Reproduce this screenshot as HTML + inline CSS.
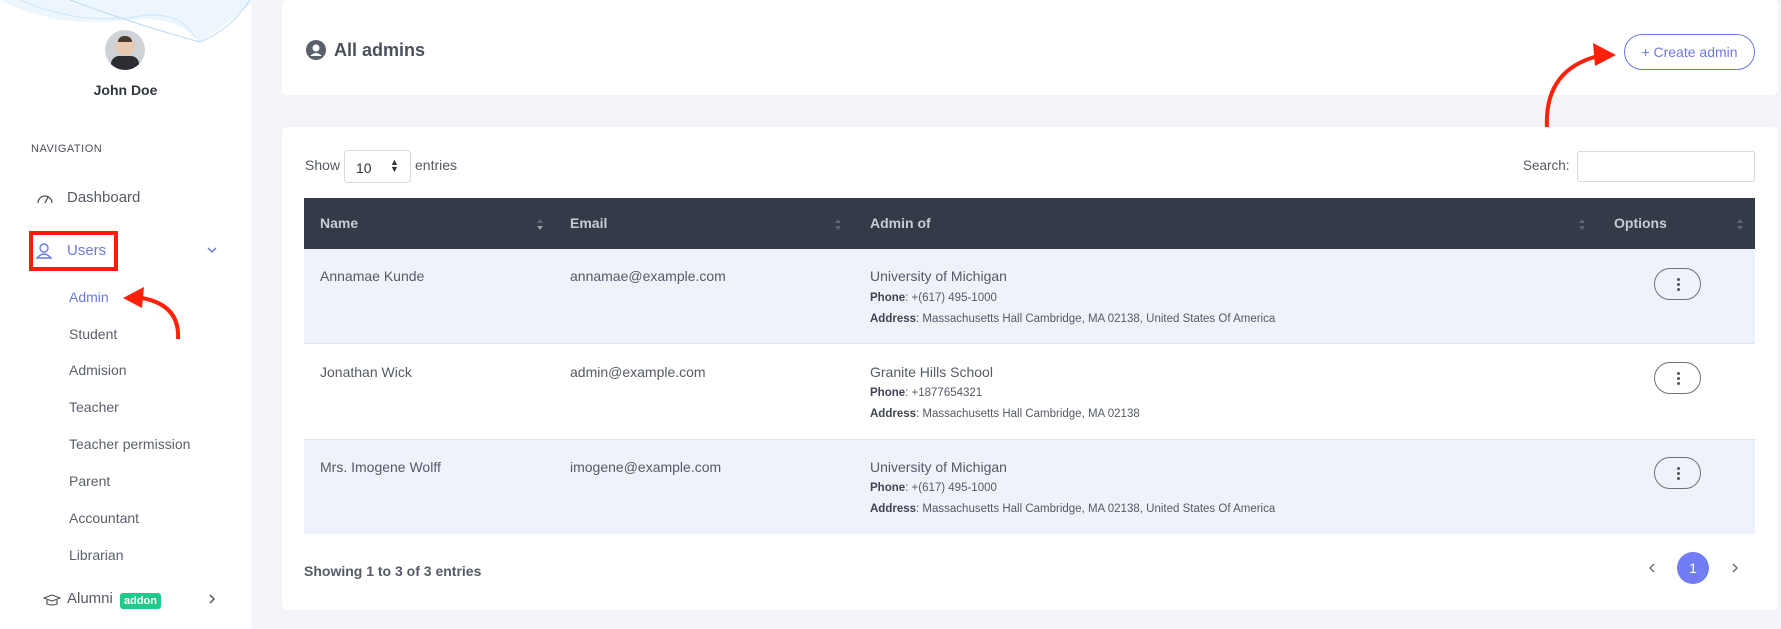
<!DOCTYPE html>
<html><head><meta charset="utf-8"><style>
*{box-sizing:border-box;margin:0;padding:0}
body{width:1781px;height:629px;overflow:hidden;background:#f3f4f8;font-family:"Liberation Sans",sans-serif;position:relative;color:#4a4f5a}
.abs{position:absolute;white-space:nowrap}
#side{position:absolute;left:0;top:0;width:251px;height:629px;background:#fff}
.nav{position:absolute;left:69px;font-size:14px;color:#5a5f6b}
.card{position:absolute;background:#fff;border-radius:5px}
.cell{position:absolute;font-size:14px;color:#555a66}
.small{font-size:11.5px;color:#555a66}
.small b{color:#3f4450}
.opt{position:absolute;left:1654px;width:47px;height:32px;border:1px solid #6c717c;border-radius:16px}
.opt i{position:absolute;left:22px;width:3px;height:3px;background:#555;border-radius:50%}
.sort{position:absolute;width:8px;height:14px}
</style></head><body>
<div id="side">
<svg class="abs" style="left:0;top:0" width="251" height="50"><path d="M0 0 Q60 30 130 20 Q175 14 200 42 Q230 22 251 3 L251 0Z" fill="#eef6fd"/><path d="M20 0 Q80 26 140 16 Q180 10 195 38" stroke="#cfe6f8" fill="none"/><path d="M70 0 Q140 26 200 42 Q230 30 250 0" stroke="#bcdaf4" fill="none"/></svg>
<div class="abs" style="left:105px;top:30px;width:40px;height:40px;border-radius:50%;background:radial-gradient(circle at 50% 40%,#e8c8b0 0 30%,#cfd3d8 31%);overflow:hidden"><div style="position:absolute;left:6px;top:26px;width:28px;height:18px;background:#2b2d33;border-radius:8px 8px 0 0"></div><div style="position:absolute;left:13px;top:6px;width:14px;height:6px;background:#4a3a30;border-radius:6px 6px 0 0"></div></div>
<div class="abs" style="left:0;width:251px;text-align:center;top:82px;font-size:14px;font-weight:bold;color:#2f3440">John Doe</div>
<div class="abs" style="left:31px;top:143px;font-size:11px;color:#4a4f5a;letter-spacing:.5px">NAVIGATION</div>
<svg class="abs" style="left:36px;top:192px" width="18" height="12"><path d="M2 11 A7 7 0 0 1 16 11" fill="none" stroke="#555" stroke-width="1.3"/><path d="M9 11 L12 5" stroke="#555" stroke-width="1.3"/></svg>
<div class="abs" style="left:67px;top:189px;font-size:15px;color:#555a66">Dashboard</div>
<div class="abs" style="left:29px;top:231px;width:89px;height:40px;border:4px solid #ff1a0a"></div>
<svg class="abs" style="left:35px;top:242px" width="18" height="18"><circle cx="9" cy="6" r="4" fill="none" stroke="#6c7ae0" stroke-width="1.4"/><path d="M2 16 Q9 8 16 16 Z" fill="none" stroke="#6c7ae0" stroke-width="1.4"/></svg>
<div class="abs" style="left:67px;top:242px;font-size:15px;color:#6c7ae0">Users</div>
<svg class="abs" style="left:207px;top:246px" width="10" height="8"><path d="M1 2 L5 6 L9 2" fill="none" stroke="#6c7ae0" stroke-width="1.5"/></svg>
<div class="nav" style="top:289px;color:#6c7ae0">Admin</div>
<div class="nav" style="top:326px">Student</div>
<div class="nav" style="top:362px">Admision</div>
<div class="nav" style="top:399px">Teacher</div>
<div class="nav" style="top:436px">Teacher permission</div>
<div class="nav" style="top:473px">Parent</div>
<div class="nav" style="top:510px">Accountant</div>
<div class="nav" style="top:547px">Librarian</div>
<svg class="abs" style="left:43px;top:594px" width="18" height="12"><path d="M1 4 L9 1 L17 4 L9 7Z" fill="none" stroke="#555" stroke-width="1.2"/><path d="M4 6 V10 Q9 12 14 10 V6" fill="none" stroke="#555" stroke-width="1.2"/></svg>
<div class="abs" style="left:67px;top:590px;font-size:15px;color:#555a66">Alumni</div>
<div class="abs" style="left:120px;top:593px;width:41px;height:16px;background:#22c98a;border-radius:3px;color:#fff;font-size:11px;font-weight:bold;text-align:center;line-height:16px">addon</div>
<svg class="abs" style="left:208px;top:594px" width="8" height="10"><path d="M2 1 L6 5 L2 9" fill="none" stroke="#555" stroke-width="1.5"/></svg>
<svg class="abs" style="left:110px;top:283px" width="80" height="60"><path d="M68 56 Q70 22 32 15" fill="none" stroke="#ff200a" stroke-width="4"/><path d="M13 15 L34 4 L32 25Z" fill="#ff200a"/></svg>
</div>

<div class="card" style="left:282px;top:0;width:1496px;height:95px"></div>
<svg class="abs" style="left:306px;top:40px" width="20" height="20"><circle cx="10" cy="10" r="10" fill="#5a606c"/><circle cx="10" cy="8" r="3.5" fill="#fff"/><path d="M4 16 Q10 10 16 16" fill="#fff"/></svg>
<div class="abs" style="left:334px;top:40px;font-size:18px;font-weight:bold;color:#4a4f5a">All admins</div>
<div class="abs" style="left:1624px;top:34px;width:131px;height:36px;border:1px solid #6c7ae0;border-radius:18px;color:#6c7ae0;font-size:14px;text-align:center;line-height:34px">+ Create admin</div>
<svg class="abs" style="left:1530px;top:40px" width="100" height="90"><path d="M17 88 Q14 30 68 16" fill="none" stroke="#ff200a" stroke-width="4"/><path d="M63 3 L86 15 L65 26Z" fill="#ff200a"/></svg>

<div class="card" style="left:282px;top:127px;width:1496px;height:483px"></div>
<div class="abs" style="left:305px;top:157px;font-size:14px;color:#555a66">Show</div>
<div class="abs" style="left:344px;top:150px;width:67px;height:33px;border:1px solid #d6d9de;border-radius:4px;font-size:14px;padding:9px 0 0 11px;color:#333">10<span style="position:absolute;left:45px;top:8px;font-size:9px;line-height:7px">▲<br>▼</span></div>
<div class="abs" style="left:415px;top:157px;font-size:14px;color:#555a66">entries</div>
<div class="abs" style="left:1523px;top:158px;font-size:13.5px;color:#555a66">Search:</div>
<div class="abs" style="left:1577px;top:151px;width:178px;height:31px;border:1px solid #d6d9de;border-radius:3px"></div>

<div class="abs" style="left:304px;top:198px;width:1451px;height:51px;background:#343a47"></div>
<div class="abs" style="left:320px;top:215px;font-size:14px;font-weight:bold;color:#c8ccd3">Name</div>
<div class="abs" style="left:570px;top:215px;font-size:14px;font-weight:bold;color:#c8ccd3">Email</div>
<div class="abs" style="left:870px;top:215px;font-size:14px;font-weight:bold;color:#c8ccd3">Admin of</div>
<div class="abs" style="left:1614px;top:215px;font-size:14px;font-weight:bold;color:#c8ccd3">Options</div>
<svg class="sort" style="left:536px;top:218px"><path d="M1 5 L4 1 L7 5Z" fill="#5f6573"/><path d="M1 8 L4 12 L7 8Z" fill="#9aa0ab"/></svg>
<svg class="sort" style="left:834px;top:218px"><path d="M1 5 L4 1 L7 5Z M1 8 L4 12 L7 8Z" fill="#5f6573"/></svg>
<svg class="sort" style="left:1578px;top:218px"><path d="M1 5 L4 1 L7 5Z M1 8 L4 12 L7 8Z" fill="#5f6573"/></svg>
<svg class="sort" style="left:1736px;top:218px"><path d="M1 5 L4 1 L7 5Z M1 8 L4 12 L7 8Z" fill="#5f6573"/></svg>

<div class="abs" style="left:304px;top:249px;width:1451px;height:95px;background:#eef2fa;border-bottom:1px solid #dfe4ec"></div>
<div class="abs" style="left:304px;top:344px;width:1451px;height:96px;background:#fff;border-bottom:1px solid #dfe4ec"></div>
<div class="abs" style="left:304px;top:440px;width:1451px;height:94px;background:#eef2fa"></div>

<div class="cell abs" style="left:320px;top:268px">Annamae Kunde</div>
<div class="cell abs" style="left:570px;top:268px">annamae@example.com</div>
<div class="cell abs" style="left:870px;top:268px">University of Michigan</div>
<div class="abs small" style="left:870px;top:292px"><b>Phone</b>: +(617) 495-1000</div>
<div class="abs small" style="left:870px;top:313px"><b>Address</b>: Massachusetts Hall Cambridge, MA 02138, United States Of America</div>
<div class="opt" style="top:268px"><i style="top:9px"></i><i style="top:14px"></i><i style="top:19px"></i></div>

<div class="cell abs" style="left:320px;top:364px">Jonathan Wick</div>
<div class="cell abs" style="left:570px;top:364px">admin@example.com</div>
<div class="cell abs" style="left:870px;top:364px">Granite Hills School</div>
<div class="abs small" style="left:870px;top:387px"><b>Phone</b>: +1877654321</div>
<div class="abs small" style="left:870px;top:408px"><b>Address</b>: Massachusetts Hall Cambridge, MA 02138</div>
<div class="opt" style="top:362px"><i style="top:9px"></i><i style="top:14px"></i><i style="top:19px"></i></div>

<div class="cell abs" style="left:320px;top:459px">Mrs. Imogene Wolff</div>
<div class="cell abs" style="left:570px;top:459px">imogene@example.com</div>
<div class="cell abs" style="left:870px;top:459px">University of Michigan</div>
<div class="abs small" style="left:870px;top:482px"><b>Phone</b>: +(617) 495-1000</div>
<div class="abs small" style="left:870px;top:503px"><b>Address</b>: Massachusetts Hall Cambridge, MA 02138, United States Of America</div>
<div class="opt" style="top:457px"><i style="top:9px"></i><i style="top:14px"></i><i style="top:19px"></i></div>

<div class="abs" style="left:304px;top:563px;font-size:14px;font-weight:bold;color:#555a66">Showing 1 to 3 of 3 entries</div>
<svg class="abs" style="left:1648px;top:563px" width="8" height="10"><path d="M6 1 L2 5 L6 9" fill="none" stroke="#666" stroke-width="1.3"/></svg>
<div class="abs" style="left:1677px;top:552px;width:32px;height:32px;border-radius:50%;background:#727cf5;color:#fff;font-size:14px;text-align:center;line-height:32px">1</div>
<svg class="abs" style="left:1731px;top:563px" width="8" height="10"><path d="M2 1 L6 5 L2 9" fill="none" stroke="#666" stroke-width="1.3"/></svg>
</body></html>
